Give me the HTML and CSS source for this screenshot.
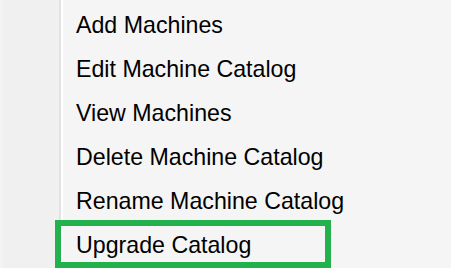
FILE: index.html
```html
<!DOCTYPE html>
<html>
<head>
<meta charset="utf-8">
<link rel="stylesheet" href="styles.css">
</head>
<body>
<div class="menu">
  <div class="gutter"></div>
  <ul class="items">
    <li class="item">Add Machines</li>
    <li class="item">Edit Machine Catalog</li>
    <li class="item">View Machines</li>
    <li class="item">Delete Machine Catalog</li>
    <li class="item">Rename Machine Catalog</li>
    <li class="item highlighted">Upgrade Catalog</li>
  </ul>
</div>
</body>
</html>
```
FILE: styles.css
```css
html, body {
  margin: 0;
  padding: 0;
  background: #f5f5f5;
}
body {
  width: 451px;
  height: 268px;
  overflow: hidden;
}
.menu {
  display: flex;
  height: 268px;
  position: relative;
}
.gutter {
  width: 56px;
  flex: none;
  background: #f0f0f0;
  border-left: 3px solid #f4f4f4;
  border-right: 2px solid #e2e2e2;
  box-shadow: 2px 0 0 #ffffff;
}
.items {
  list-style: none;
  margin: 0;
  padding: 3px 0 0 15px;
  font-family: "Liberation Sans", Arial, sans-serif;
  font-size: 23.2px;
  color: #000;
}
.item {
  height: 44px;
  line-height: 44px;
  white-space: nowrap;
}
.highlighted::after {
  content: "";
  position: absolute;
  left: 55px;
  top: 220px;
  width: 264px;
  height: 36px;
  border: 6px solid #22b14c;
}
```
